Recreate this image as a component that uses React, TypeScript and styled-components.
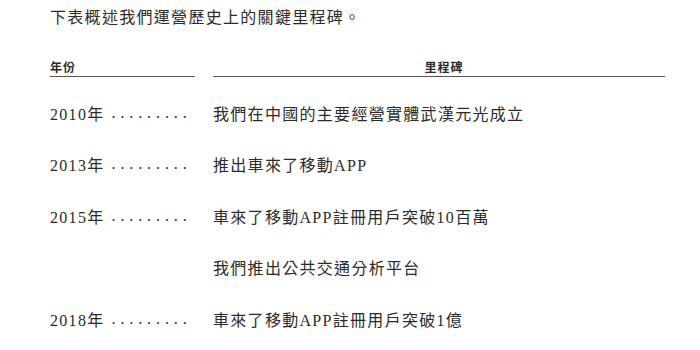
import React from 'react';
import styled, { createGlobalStyle } from 'styled-components';

const GlobalStyle = createGlobalStyle`
  body {
    margin: 0;
    background: #ffffff;
    color: #2b2b2b;
    font-family: "Liberation Serif", "Noto Sans CJK TC", serif;
  }
`;

const Page = styled.div`
  padding: 8px 0 0 50px;
  width: 615px;
`;

const Intro = styled.p`
  margin: 0;
  font-size: 16px;
  line-height: 20px;
  letter-spacing: 1.3px;
`;

const Table = styled.div`
  margin-top: 32px;
  display: grid;
  grid-template-columns: 145px 452px;
  column-gap: 18px;
`;

const HeadCell = styled.div<{ $center?: boolean }>`
  font-family: "Noto Sans CJK TC", sans-serif;
  font-weight: 700;
  font-size: 12px;
  line-height: 14px;
  letter-spacing: 1px;
  padding-bottom: 2px;
  padding-left: ${(p) => (p.$center ? '10px' : '0')};
  border-bottom: 1px solid #555;
  text-align: ${(p) => (p.$center ? 'center' : 'left')};
  margin-bottom: 10px;
`;

const Cell = styled.div`
  height: 51.5px;
  display: flex;
  align-items: center;
  font-size: 16px;
  letter-spacing: 1.3px;
  white-space: nowrap;
`;

const Leader = styled.span`
  margin-left: 7px;
  letter-spacing: 4.9px;
`;

const rows: [string, string][] = [
  ['2010年', '我們在中國的主要經營實體武漢元光成立'],
  ['2013年', '推出車來了移動APP'],
  ['2015年', '車來了移動APP註冊用戶突破10百萬'],
  ['', '我們推出公共交通分析平台'],
  ['2018年', '車來了移動APP註冊用戶突破1億'],
];

export default function App() {
  return (
    <>
      <GlobalStyle />
      <Page>
        <Intro>下表概述我們運營歷史上的關鍵里程碑。</Intro>
        <Table>
          <HeadCell>年份</HeadCell>
          <HeadCell $center>里程碑</HeadCell>
          {rows.map(([year, text], i) => (
            <React.Fragment key={i}>
              <Cell>
                {year && (
                  <>
                    {year}
                    <Leader>.........</Leader>
                  </>
                )}
              </Cell>
              <Cell>{text}</Cell>
            </React.Fragment>
          ))}
        </Table>
      </Page>
    </>
  );
}
